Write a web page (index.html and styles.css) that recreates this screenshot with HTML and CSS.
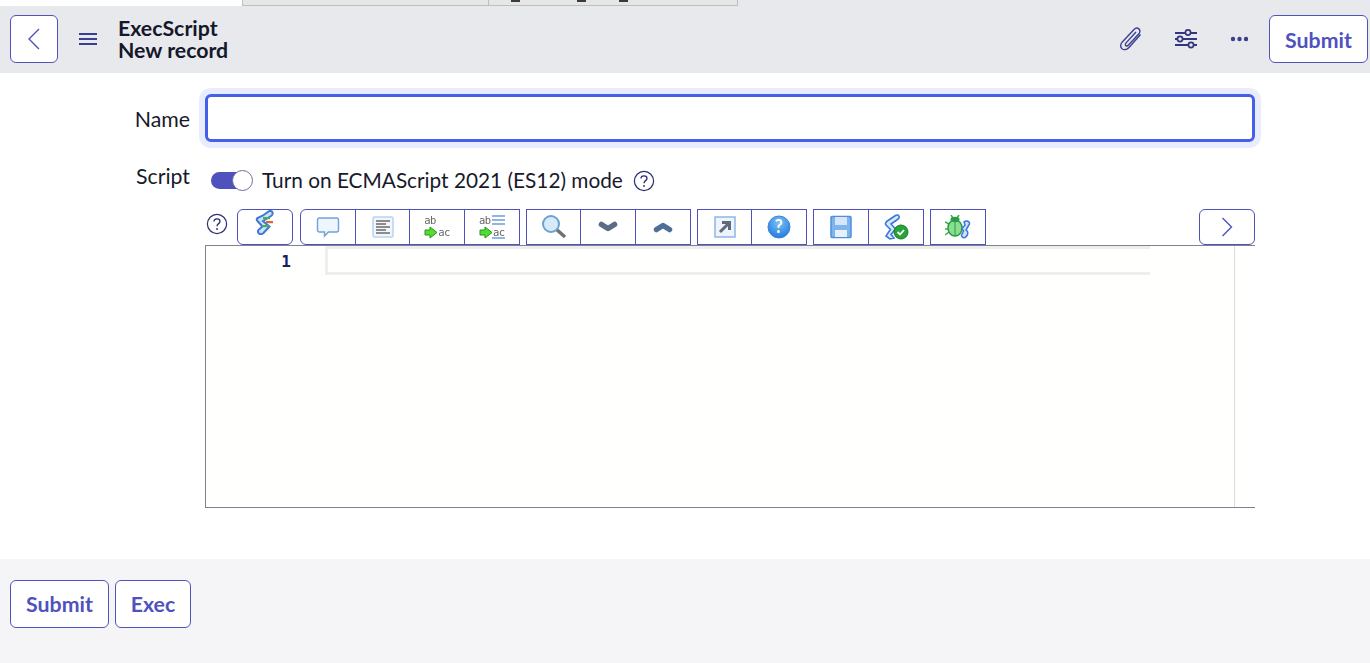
FILE: index.html
```html
<!DOCTYPE html>
<html lang="en">
<head>
<meta charset="utf-8">
<title>ExecScript</title>
<link rel="stylesheet" href="styles.css">
</head>
<body>
<div class="page">
  <header class="header">
    <div class="strip"></div>
    <div class="tabs"><div class="tab-a"></div><div class="tab-b"><i></i><i class="m2"></i><i class="m3"></i></div></div>
    <button class="btn icon-btn" aria-label="Back">
      <svg width="14" height="22" viewBox="0 0 14 22"><path d="M12 1 2 11l10 10" fill="none" stroke="#4f52bd" stroke-width="1.4"/></svg>
    </button>
    <svg class="menu" width="18" height="12" viewBox="0 0 18 12"><path d="M0 1h18M0 6h18M0 11h18" stroke="#3c3f8f" stroke-width="2"/></svg>
    <div class="title"><div>ExecScript</div><div>New record</div></div>
    <div class="actions">
      <svg class="act clip" width="24" height="24" viewBox="0 0 24 24"><path d="M21.500 7.500 10 20.500c-2 2.200-5 2.800-7 1.200-1.900-1.600-1.700-4.500.3-6.800L14.800 2.800c1.500-1.700 3.700-2.100 5.100-.9 1.400 1.200 1.300 3.400-.2 5.100L9.500 18c-.9 1-2 1.200-2.700.6-.7-.6-.6-1.700.3-2.700L17 5" fill="none" stroke="#3c3f8f" stroke-width="1.400"/></svg>
      <svg class="act sliders" width="22" height="20" viewBox="0 0 22 20"><path d="M0 4h22M0 10h22M0 16h22" stroke="#33367f" stroke-width="2"/><circle cx="13" cy="3.500" r="2.600" fill="#e8e9ec" stroke="#33367f" stroke-width="1.700"/><circle cx="5" cy="10" r="2.600" fill="#e8e9ec" stroke="#33367f" stroke-width="1.700"/><circle cx="16" cy="16" r="2.600" fill="#e8e9ec" stroke="#33367f" stroke-width="1.700"/></svg>
      <svg class="act dots" width="18" height="6" viewBox="0 0 18 6"><circle cx="3" cy="3" r="2.200" fill="#3c3f8f"/><circle cx="9.500" cy="3" r="2.200" fill="#3c3f8f"/><circle cx="16" cy="3" r="2.200" fill="#3c3f8f"/></svg>
      <button class="btn text-btn submit-top">Submit</button>
    </div>
  </header>

  <main class="form">
    <div class="row name-row">
      <label class="label name-label">Name</label>
      <input class="input" type="text">
    </div>
    <div class="row script-row">
      <label class="label">Script</label>
      <div class="field">
        <div class="mode">
          <span class="toggle"><span class="knob"></span></span>
          <span class="mode-text">Turn on ECMAScript 2021 (ES12) mode</span>
          <svg class="help-big" width="22" height="22" viewBox="0 0 22 22"><circle cx="11" cy="11" r="9.600" fill="none" stroke="#2b2e6f" stroke-width="1.200"/><path d="M8 8.600c0-1.700 1.300-2.800 3-2.800s3 1.100 3 2.600c0 2.300-3 2.200-3 4.800" fill="none" stroke="#2b2e6f" stroke-width="1.300"/><circle cx="11" cy="16" r=".9" fill="#2b2e6f"/></svg>
        </div>
        <div class="toolbar">
          <svg class="help-small" width="22" height="22" viewBox="0 0 22 22"><circle cx="11" cy="11" r="9.600" fill="none" stroke="#2b2e6f" stroke-width="1.200"/><path d="M8 8.600c0-1.700 1.300-2.800 3-2.800s3 1.100 3 2.600c0 2.300-3 2.200-3 4.800" fill="none" stroke="#2b2e6f" stroke-width="1.300"/><circle cx="11" cy="16" r=".9" fill="#2b2e6f"/></svg>
          <div class="tb-group first-group"><button class="tb tb-first-round" aria-label="Format">
            <svg class="scroll-icon" width="20" height="25" viewBox="0 0 20 25"><path d="M8 5.500 13.500 1.500c1.500-1 3.500-.5 4 1s0 2.500-1.500 3.500L8 11l6.500 5.500-6 6.500c-1.500 1.500-4 1.500-5 0s-.5-3 1-4l3-2.500L2.500 11c-1-1-1-2 0-3z" fill="#cfe1f8" stroke="#3b78d8" stroke-width="2"/><rect x="8" y="7" width="7" height="2.200" fill="#46b34a"/><rect x="11" y="11" width="7" height="2.200" fill="#e2603c"/><rect x="7" y="15" width="7" height="2.200" fill="#46b34a"/></svg>
          </button></div>
          <div class="tb-group">
            <button class="tb round-left" aria-label="Comment"><svg width="24" height="22" viewBox="0 0 24 22"><path d="M3.500 2h17a2 2 0 0 1 2 2v10a2 2 0 0 1-2 2h-8l-4 4v-4h-5a2 2 0 0 1-2-2V4a2 2 0 0 1 2-2z" fill="#eef5fc" stroke="#6fa3d8" stroke-width="1.400"/></svg></button>
            <button class="tb" aria-label="Format code"><svg width="22" height="22" viewBox="0 0 22 22"><rect x="1" y="1" width="20" height="20" rx="1.500" fill="#f2f5f9" stroke="#b9d2f1" stroke-width="1.500"/><path d="M4 5h14M4 8h10M4 11h14M4 14h10M4 17h14" stroke="#6a6a6a" stroke-width="1.500"/></svg></button>
            <button class="tb" aria-label="Replace"><span class="rep"><span class="ab">ab</span><span class="rep-row"><svg width="14" height="13" viewBox="0 0 14 13"><path d="M1 4h5V1l7 5.500L6 12V9H1z" fill="#4fe02f" stroke="#2d8f1d"/></svg><span class="ab">ac</span></span></span></button>
            <button class="tb" aria-label="Replace all"><span class="rep"><span class="ab">ab</span><span class="rep-row"><svg width="14" height="13" viewBox="0 0 14 13"><path d="M1 4h5V1l7 5.500L6 12V9H1z" fill="#4fe02f" stroke="#2d8f1d"/></svg><span class="ab">ac</span></span><svg class="lines" width="13" height="25" viewBox="0 0 13 25"><path d="M0 2h13M0 6h13M0 10h13M0 24h13" stroke="#6f9fdc" stroke-width="1.500"/></svg></span></button>
          </div>
          <div class="tb-group">
            <button class="tb" aria-label="Search"><svg width="26" height="26" viewBox="0 0 26 26"><path d="m15 15 9 8" stroke="#6c7278" stroke-width="3.500"/><circle cx="10" cy="10" r="8" fill="#d6eafa" stroke="#6ea1cf" stroke-width="2"/></svg></button>
            <button class="tb" aria-label="Next"><svg width="20" height="14" viewBox="0 0 20 14"><path d="m3.500 4.500 6.500 4 6.500-4" fill="none" stroke="#5a6c86" stroke-width="5.500" stroke-linecap="round" stroke-linejoin="round"/></svg></button>
            <button class="tb" aria-label="Previous"><svg width="20" height="14" viewBox="0 0 20 14"><path d="m3.500 9.500 6.500-4 6.500 4" fill="none" stroke="#4f6f98" stroke-width="5.500" stroke-linecap="round" stroke-linejoin="round"/></svg></button>
          </div>
          <div class="tb-group">
            <button class="tb" aria-label="Expand"><svg width="22" height="22" viewBox="0 0 22 22"><rect x="1" y="1" width="20" height="20" fill="#eef4fb" stroke="#8db6e4" stroke-width="1.500"/><path d="M6 16 15 7M8 6.500h7.500V14" fill="none" stroke="#5f6b78" stroke-width="3"/></svg></button>
            <button class="tb" aria-label="Help"><svg width="24" height="24" viewBox="0 0 24 24"><defs><radialGradient id="hb" cx=".5" cy=".3" r=".8"><stop offset="0" stop-color="#7cc4f8"/><stop offset="1" stop-color="#1a6fd8"/></radialGradient></defs><circle cx="12" cy="12" r="11" fill="url(#hb)" stroke="#3a86dc"/><text class="qmark" x="12" y="18" text-anchor="middle">?</text></svg></button>
          </div>
          <div class="tb-group">
            <button class="tb" aria-label="Save"><svg width="22" height="24" viewBox="0 0 22 24"><path d="M2 1.500h18a1 1 0 0 1 1 1v19a1 1 0 0 1-1 1H2a1 1 0 0 1-1-1v-19a1 1 0 0 1 1-1z" fill="#7fb4ee" stroke="#4f8fdc" stroke-width="1.500"/><rect x="5" y="2" width="12" height="8" fill="#d5e6f8"/><rect x="5" y="15" width="12" height="7" fill="#e8f0f8"/></svg></button>
            <button class="tb" aria-label="Validate"><svg width="26" height="26" viewBox="0 0 26 26"><path d="M5 6.500 12.500 1.500c1.500-1 3-.5 3.500.7s0 2.300-1.500 3.300L8 10l4.500 5L8 20.500l3 3.500-4 1-4-3 3-4.500 1.500-2L3 11c-1-1-.5-3 2-4.500z" fill="#dbe8f8" stroke="#3b78d8" stroke-width="1.600"/><circle cx="18" cy="18" r="7" fill="#27a33a" stroke="#1b7a2b"/><path d="m14.500 18 2.500 2.500 4-4.500" fill="none" stroke="#fff" stroke-width="1.800"/></svg></button>
          </div>
          <div class="tb-group">
            <button class="tb tb-solo" aria-label="Debug"><svg width="26" height="24" viewBox="0 0 26 24"><path d="M0 7l4 2M0 14h4M0 20l4-3M6 0l2 3M14 0l-2 3" stroke="#31b04a" stroke-width="1.500"/><ellipse cx="10" cy="13" rx="7" ry="8" fill="#8adf8e" stroke="#2f9a45" stroke-width="1.500"/><path d="M10 6v15" stroke="#2f9a45"/><ellipse cx="10" cy="4.500" rx="4.500" ry="2.800" fill="#2f9a45"/><path d="m19 7 2-1c2-.5 4 1 3.500 3L21 15l1.500 1.500c1 2-.5 5-2.500 6-2 .5-3.500-.5-3.500-2.500l2-4-1.500-2.500L20 10z" fill="#cfe1f8" stroke="#3b78d8" stroke-width="1.500"/></svg></button>
          </div>
          <button class="tb tb-next" aria-label="More"><svg width="12" height="20" viewBox="0 0 12 20"><path d="m1.500 1 9 9-9 9" fill="none" stroke="#4f52bd" stroke-width="1.400"/></svg></button>
        </div>
        <div class="editor">
          <div class="gutter">1</div>
          <div class="code"><div class="active-line"></div></div>
          <div class="minimap"></div>
        </div>
      </div>
    </div>
  </main>

  <footer class="footer">
    <button class="btn text-btn">Submit</button>
    <button class="btn text-btn">Exec</button>
  </footer>
</div>
</body>
</html>
```
FILE: styles.css
```css
* { box-sizing: border-box; }
html, body { margin: 0; padding: 0; background: #fff; }
body { font-family: Lato, "Liberation Sans", sans-serif; color: #181a2c; height: 663px; overflow: hidden; }
.page { height: 663px; display: flex; flex-direction: column; }

.header { position: relative; height: 73px; flex: none; background: #e8e9ec; display: flex; align-items: center; padding: 5px 2px 0 10px; }
.strip { position: absolute; left: 0; top: 0; width: 242px; height: 6px; background: #fff; }
.tabs { position: absolute; left: 242px; top: 0; width: 496px; height: 6px; display: flex; background: #e6e6e6; border: 1px solid #bdbec3; border-top: 0; }
.tab-a { width: 246px; border-right: 1px solid #bdbec3; }
.tab-b { flex: 1; position: relative; display: flex; padding-left: 22px; }
.tab-b i { width: 9px; height: 2px; background: #3d3a38; }
.tab-b .m2 { margin-left: 57px; }
.tab-b .m3 { margin-left: 33px; }

.btn { background: #fff; border: 1px solid #5153bc; border-radius: 6px; color: #4f52bd; font-family: inherit; padding: 0; display: flex; align-items: center; justify-content: center; }
.icon-btn { width: 48px; height: 48px; }
.menu { margin-left: 21px; }
.title { margin-left: 21px; font-size: 21.3px; font-weight: 700; line-height: 22px; color: #15172a; }
.actions { margin-left: auto; display: flex; align-items: center; }
.sliders { margin-left: 32px; }
.dots { margin-left: 33px; }
.text-btn { height: 48px; font-size: 21.3px; font-weight: 700; }
.submit-top { width: 99px; margin-left: 21px; padding-top: 2px; }

.form { flex: 1; background: #fff; display: flex; flex-direction: column; padding-top: 21px; }
.row { display: flex; }
.label { width: 190px; text-align: right; font-size: 21.3px; line-height: 24px; color: #181a2c; flex: none; }
.name-label { padding-top: 2px; }
.name-row { align-items: center; }
.input { margin-left: 15px; width: 1050px; height: 48px; border: 3px solid #4560e8; border-radius: 6px; box-shadow: 0 0 0 6px #e9ecfc; outline: 0; background: #fff; }
.script-row { margin-top: 22px; }
.field { margin-left: 15px; width: 1050px; }
.mode { display: flex; align-items: center; height: 25px; margin-top: 4px; padding-left: 6px; }
.toggle { position: relative; width: 42px; height: 21px; display: block; }
.toggle::before { content: ""; position: absolute; left: 0; top: 2px; width: 36px; height: 17px; border-radius: 9px; background: #4f52bd; }
.knob { position: absolute; right: 0; top: 0; width: 21px; height: 21px; border-radius: 50%; background: #fff; border: 1px solid #6b6e9e; }
.mode-text { margin-left: 9px; font-size: 20.8px; line-height: 24px; margin-top: -1px; }
.help-big { margin-left: 10px; }

.toolbar { display: flex; align-items: stretch; height: 36px; margin-top: 16px; position: relative; }
.help-small { align-self: flex-start; margin-top: 4px; margin-left: 1px; margin-right: 9px; flex: none; }
.tb-group { display: flex; margin-right: 6px; flex: none; }
.first-group { margin-right: 7.3px; }
.tb { width: 55.7px; height: 36px; flex: none; background: #fff; border: 1px solid #4f52bd; margin-left: -1px; padding: 0; display: flex; align-items: center; justify-content: center; }
.tb-group .tb:first-child { margin-left: 0; }
.tb-group .tb-solo { width: 56.3px; }
.tb-first-round { border-radius: 6px; }
.round-left { border-radius: 6px 0 0 6px; }
.tb-next { width: 56px; margin-left: auto; border-radius: 6px; }
.tb svg { display: block; filter: blur(.35px); }
.tb-next svg { filter: none; }
.scroll-icon { margin-bottom: 10px; }
.qmark { font-family: Lato, sans-serif; font-size: 18px; font-weight: 700; fill: #fff; }
.rep { position: relative; display: flex; flex-direction: column; align-items: flex-start; width: 26px; filter: blur(.35px); }
.rep-row { display: flex; align-items: center; }
.ab { font-family: "DejaVu Sans Mono", monospace; font-size: 10.5px; line-height: 11px; color: #666; font-weight: 400; letter-spacing: -.5px; }
.lines { position: absolute; right: 0; top: -1px; }

.editor { height: 263px; display: flex; background: #fffffd; border: 1px solid #80828e; border-right: 0; }
.gutter { width: 119px; flex: none; text-align: right; padding: 6px 34px 0 0; font-family: "DejaVu Sans Mono", monospace; font-weight: 700; font-size: 16px; line-height: 20px; color: #14205f; }
.code { width: 909px; flex: none; }
.active-line { width: 825px; height: 29px; border: 3px solid #eeeeec; border-right: 0; }
.minimap { flex: 1; border-left: 1px solid #dcdcda; }

.footer { height: 104px; flex: none; background: #f5f5f8; display: flex; gap: 6px; align-items: flex-start; padding: 21px 10px 0; }
.footer .btn:first-child { width: 99px; }
.footer .btn:last-child { width: 76px; }
```
